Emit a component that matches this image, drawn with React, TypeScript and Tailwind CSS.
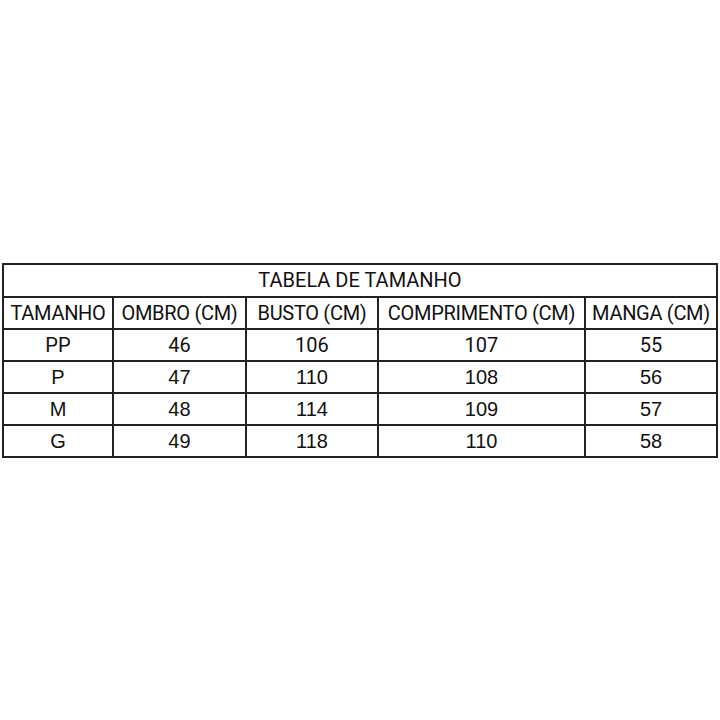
const rows = [
  ['PP', '46', '106', '107', '55'],
  ['P', '47', '110', '108', '56'],
  ['M', '48', '114', '109', '57'],
  ['G', '49', '118', '110', '58'],
];

const headers = ['TAMANHO', 'OMBRO (CM)', 'BUSTO (CM)', 'COMPRIMENTO (CM)', 'MANGA (CM)'];
const widths = ['w-[110px]', 'w-[133px]', 'w-[132px]', 'w-[207px]', 'w-[132px]'];

export default function App() {
  return (
    <div className="w-[720px] h-[720px] bg-white flex items-center justify-center text-[#111]">
      <table className="border-collapse table-fixed w-[715px] border-2 border-[#222] font-['Roboto',sans-serif] text-[20px]">
        <colgroup>
          {widths.map((w) => (
            <col key={w} className={w} />
          ))}
        </colgroup>
        <thead>
          <tr className="h-[33px]">
            <th colSpan={5} className="border-2 border-[#222] font-normal text-center leading-none">
              TABELA DE TAMANHO
            </th>
          </tr>
          <tr className="h-[32px]">
            {headers.map((h) => (
              <th key={h} className="border-2 border-[#222] font-normal text-center leading-none whitespace-nowrap px-0 tracking-[-0.3px]">
                {h}
              </th>
            ))}
          </tr>
        </thead>
        <tbody>
          {rows.map((r, ri) => (
            <tr key={r[0]} className="h-[32px]">
              {r.map((c, ci) => (
                <td
                  key={ci}
                  className={`border-2 border-[#222] text-center leading-none ${
                    ri === 0 ? '' : "font-['Liberation_Sans',sans-serif]"
                  }`}
                >
                  {c}
                </td>
              ))}
            </tr>
          ))}
        </tbody>
      </table>
    </div>
  );
}
